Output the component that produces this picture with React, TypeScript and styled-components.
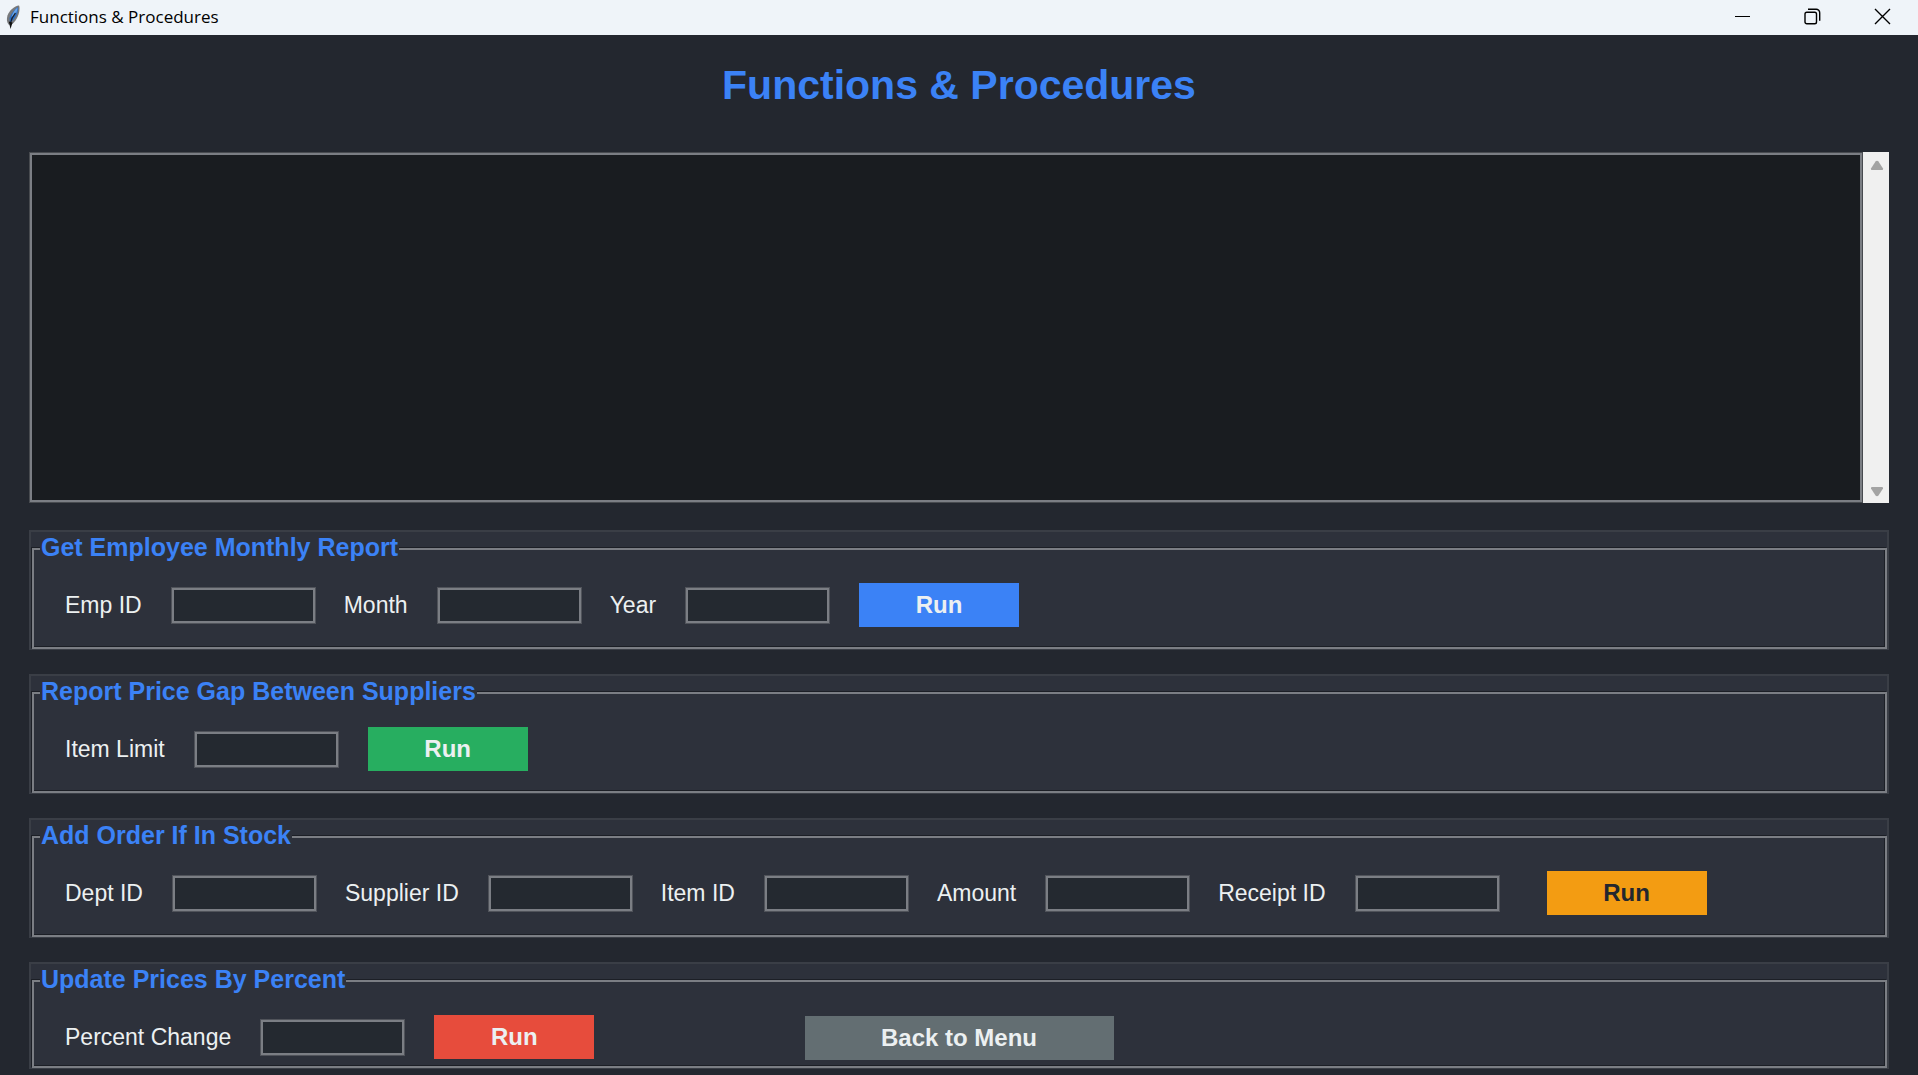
import React, { useId } from "react";
import styled, { createGlobalStyle } from "styled-components";

const sans = `"Liberation Sans", Arial, sans-serif`;

const colors = {
  page: "#23272f",
  panel: "#2d313b",
  accent: "#3b82f6",
  edge: "#3a3e46",
  line: "#7b7e84",
  shade: "#1c1f26",
  text: "#ecf0f1",
};

const GlobalStyle = createGlobalStyle`
  *, *::before, *::after { box-sizing: border-box; }
  body { margin: 0; background: ${colors.page}; font-family: ${sans}; }
`;

const Window = styled.div`
  display: flex;
  flex-direction: column;
  min-height: 100vh;
  background: ${colors.page};
`;

const TitleBar = styled.header`
  display: flex;
  align-items: center;
  height: 35px;
  padding-left: 5px;
  background: #eff4f9;
`;

const FeatherIcon = styled.svg`
  width: 16px;
  height: 25px;
  margin-right: 9px;
`;

const WindowName = styled.span`
  flex: 1;
  padding-bottom: 1px;
  font: 17px/24px "Open Sans", "Noto Sans", sans-serif;
  color: #000;
`;

const WindowButton = styled.button`
  display: flex;
  align-items: center;
  justify-content: center;
  width: 70px;
  height: 35px;
  padding: 0 2px 2px 0;
  border: 0;
  background: transparent;
`;

const Glyph = styled.svg`
  width: 17px;
  height: 17px;
  fill: none;
  stroke: #000;
  stroke-width: 1.4;
`;

const Content = styled.main`
  display: flex;
  flex: 1;
  flex-direction: column;
  padding: 24px 29px 6px;
`;

const Heading = styled.h1`
  margin: 0 0 41px;
  font-size: 41px;
  line-height: 52px;
  text-align: center;
  color: ${colors.accent};
`;

const OutputArea = styled.div`
  display: flex;
  flex: 1;
  min-height: 200px;
  margin-bottom: 27px;
`;

const Output = styled.textarea`
  flex: 1;
  min-width: 0;
  padding: 4px;
  border: 3px solid ${colors.line};
  outline: 1px solid #484b50;
  outline-offset: -1px;
  background: #191c20;
  color: ${colors.text};
  font: 20px/24px "Liberation Mono", monospace;
  resize: none;
`;

const ScrollTrack = styled.div`
  display: flex;
  flex-direction: column;
  justify-content: space-between;
  align-items: center;
  width: 26px;
  padding: 8px 0 6px 2px;
  background: #f0f0f0;
`;

const ScrollArrow = styled.svg`
  width: 14px;
  height: 11px;
  fill: #a3a3a3;
`;

const Frames = styled.div`
  display: flex;
  flex-direction: column;
  gap: 24px;
`;

const Frame = styled.form`
  position: relative;
  padding: 2px 0 0 1px;
  border: 2px solid ${colors.edge};
  border-width: 2px 2px 1px 2px;
  background: ${colors.panel};
`;

const Group = styled.fieldset`
  min-width: 0;
  margin: 0;
  padding: 0 0 0 31px;
  border: 2px solid ${colors.line};
  box-shadow: -1px -1px 0 ${colors.shade}, inset -1px -1px 0 ${colors.shade};
`;

const GroupName = styled.legend`
  margin-left: -25px;
  padding: 0 1px 2px;
  background: ${colors.panel};
  font-size: 25px;
  font-weight: bold;
  line-height: 27px;
  color: ${colors.accent};
`;

const Row = styled.div<{ $tight?: boolean }>`
  display: flex;
  align-items: center;
  gap: 28px;
  padding: 20px 0 ${(p) => (p.$tight ? 7 : 20)}px;
`;

const Label = styled.label`
  padding-right: 1px;
  font-size: 23px;
  line-height: 28px;
  white-space: nowrap;
  color: ${colors.text};
`;

const Entry = styled.input`
  width: 145px;
  height: 37px;
  padding: 0 4px;
  border: 3px solid ${colors.line};
  outline: 1px solid #50535a;
  outline-offset: -1px;
  background: #242930;
  color: ${colors.text};
  font: 23px/28px ${sans};
`;

const Button = styled.button<{ $color: string; $ink?: string; $apart?: boolean }>`
  width: 160px;
  height: 44px;
  margin-left: ${(p) => (p.$apart ? 19 : 1)}px;
  padding: 0;
  border: 0;
  background: ${(p) => p.$color};
  color: ${(p) => p.$ink ?? colors.text};
  font: bold 24px/28px ${sans};
`;

const BackButton = styled(Button)`
  position: absolute;
  right: 0;
  bottom: 8px;
  left: 0;
  width: 309px;
  margin: 0 auto;
`;

type SectionProps = {
  title: string;
  fields: string[];
  color: string;
  ink?: string;
  apart?: boolean;
  tight?: boolean;
  children?: React.ReactNode;
};

function Section({ title, fields, color, ink, apart, tight, children }: SectionProps) {
  const id = useId();
  return (
    <Frame onSubmit={(e) => e.preventDefault()}>
      <Group>
        <GroupName>{title}</GroupName>
        <Row $tight={tight}>
          {fields.map((name, i) => (
            <React.Fragment key={name}>
              <Label htmlFor={`${id}-${i}`}>{name}</Label>
              <Entry id={`${id}-${i}`} type="text" />
            </React.Fragment>
          ))}
          <Button type="submit" $color={color} $ink={ink} $apart={apart}>
            Run
          </Button>
        </Row>
      </Group>
      {children}
    </Frame>
  );
}

export default function App() {
  return (
    <Window>
      <GlobalStyle />
      <TitleBar>
        <FeatherIcon viewBox="0 0 16 25">
          <path d="M14 .5C9.500 1 4.500 5 2.500 10.500 1.500 14 1.700 17 3.500 19.500l2.500.5C10.500 17 14 11 14.500 4.500c.1-1.800 0-3-.5-4z" fill="#77797c" />
          <path d="M13 2C10 4 6.500 7.500 4.500 13l.5 4.500c4-2.500 7.300-6.500 8-12.500z" fill="#2f6fc4" />
          <path d="M12.500 2.500C10 4.500 7.500 8 6.500 12l3-1.500c1.800-2.500 2.900-4.800 3-8z" fill="#6aa6ea" />
          <path d="M10.500 8C8 11 6 15 5.500 18" stroke="#16202e" strokeWidth="1.200" fill="none" />
          <path d="M3.800 16.500L5.500 24 7.500 17.500z" fill="#111" />
        </FeatherIcon>
        <WindowName>Functions &amp; Procedures</WindowName>
        <WindowButton type="button" aria-label="Minimize">
          <Glyph viewBox="0 0 17 17">
            <path d="M1 8.500h15" strokeWidth="1" />
          </Glyph>
        </WindowButton>
        <WindowButton type="button" aria-label="Restore">
          <Glyph viewBox="0 0 17 17">
            <rect x="1" y="4.200" width="11.500" height="11.500" rx="1.800" />
            <path d="M4 1.200h8.200a3.500 3.500 0 0 1 3.500 3.500v8" />
          </Glyph>
        </WindowButton>
        <WindowButton type="button" aria-label="Close">
          <Glyph viewBox="0 0 17 17">
            <path d="M1 1l15 15M16 1L1 16" />
          </Glyph>
        </WindowButton>
      </TitleBar>
      <Content>
        <Heading>Functions &amp; Procedures</Heading>
        <OutputArea>
          <Output readOnly aria-label="Output" />
          <ScrollTrack>
            <ScrollArrow viewBox="0 0 14 11">
              <path d="M5.500 1.500Q7 0 8.500 1.500L13 8.500Q13.500 10 12 10H2Q.5 10 1 8.500z" />
            </ScrollArrow>
            <ScrollArrow viewBox="0 0 14 11">
              <path d="M5.500 9.500Q7 11 8.500 9.500L13 2.500Q13.500 1 12 1H2Q.5 1 1 2.500z" />
            </ScrollArrow>
          </ScrollTrack>
        </OutputArea>
        <Frames>
          <Section title="Get Employee Monthly Report" fields={["Emp ID", "Month", "Year"]} color="#3b82f6" />
          <Section title="Report Price Gap Between Suppliers" fields={["Item Limit"]} color="#27ae60" />
          <Section
            title="Add Order If In Stock"
            fields={["Dept ID", "Supplier ID", "Item ID", "Amount", "Receipt ID"]}
            color="#f39c12"
            ink="#23272e"
            apart
          />
          <Section title="Update Prices By Percent" fields={["Percent Change"]} color="#e74c3c" tight>
            <BackButton type="button" $color="#636e72">
              Back to Menu
            </BackButton>
          </Section>
        </Frames>
      </Content>
    </Window>
  );
}
